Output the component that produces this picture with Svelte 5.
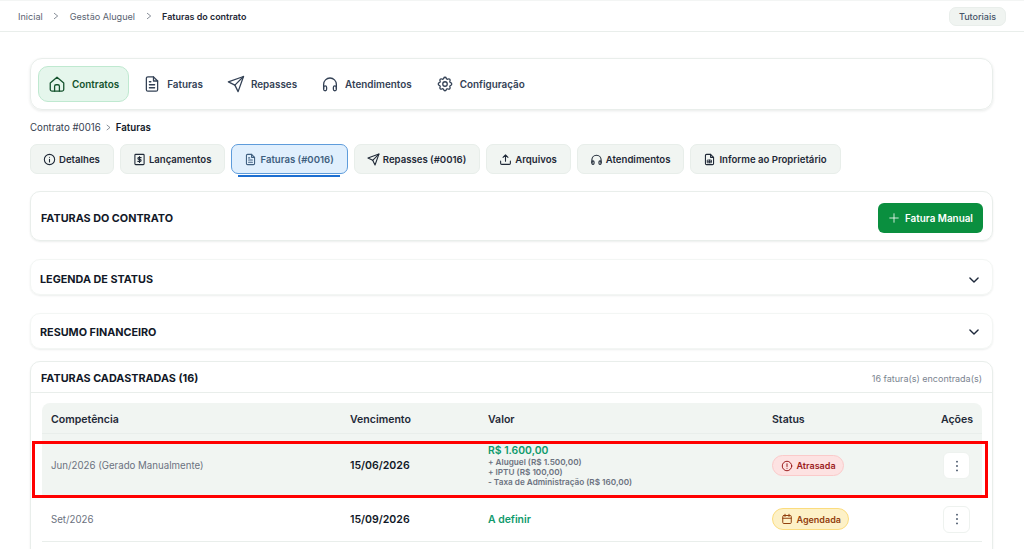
<script>
  const navItems = [
    { label: "Contratos", icon: "home", active: true },
    { label: "Faturas", icon: "file" },
    { label: "Repasses", icon: "send" },
    { label: "Atendimentos", icon: "headphones" },
    { label: "Configuração", icon: "gear" }
  ];

  const tabs = [
    { label: "Detalhes", icon: "info" },
    { label: "Lançamentos", icon: "dollar" },
    { label: "Faturas (#0016)", icon: "file", active: true },
    { label: "Repasses (#0016)", icon: "send" },
    { label: "Arquivos", icon: "upload" },
    { label: "Atendimentos", icon: "headphones" },
    { label: "Informe ao Proprietário", icon: "report" }
  ];

  const rows = [
    {
      competencia: "Jun/2026 (Gerado Manualmente)",
      vencimento: "15/06/2026",
      valor: "R$ 1.600,00",
      detalhes: ["+ Aluguel (R$ 1.500,00)", "+ IPTU (R$ 100,00)", "- Taxa de Administração (R$ 160,00)"],
      status: "Atrasada",
      highlight: true
    },
    {
      competencia: "Set/2026",
      vencimento: "15/09/2026",
      valor: "A definir",
      detalhes: [],
      status: "Agendada"
    }
  ];
</script>

{#snippet icon(name)}
  <svg class="icon" viewBox="0 0 24 24" fill="none" stroke="currentColor" stroke-width="2" stroke-linecap="round" stroke-linejoin="round">
    {#if name === "home"}
      <path d="M3 10.800 12 3l9 7.800V19a2.500 2.500 0 0 1-2.500 2.500h-13A2.500 2.500 0 0 1 3 19z" />
      <path d="M8.800 21.500V15a2 2 0 0 1 2-2h2.400a2 2 0 0 1 2 2v6.500" />
    {:else if name === "file"}
      <path d="M14 2.500H6.500a2 2 0 0 0-2 2v15a2 2 0 0 0 2 2h11a2 2 0 0 0 2-2V8z" />
      <path d="M14 2.500V8h5.500" />
      <path d="M8.500 13h7M8.500 17h7M8.500 9h2" />
    {:else if name === "send"}
      <path d="M22 2 1.800 9.200l8.700 4.300L14.800 22.200z" />
      <path d="M22 2 10.500 13.500" />
    {:else if name === "headphones"}
      <path d="M3.500 18v-5.500a8.500 8.500 0 0 1 17 0V18" />
      <rect x="3.500" y="14.500" width="4" height="6.500" rx="2" />
      <rect x="16.500" y="14.500" width="4" height="6.500" rx="2" />
    {:else if name === "gear"}
      <path d="M10.325 4.317c.426 -1.756 2.924 -1.756 3.35 0a1.724 1.724 0 0 0 2.573 1.066c1.543 -.94 3.31 .826 2.37 2.37a1.724 1.724 0 0 0 1.065 2.572c1.756 .426 1.756 2.924 0 3.35a1.724 1.724 0 0 0 -1.066 2.573c.94 1.543 -.826 3.31 -2.37 2.37a1.724 1.724 0 0 0 -2.572 1.065c-.426 1.756 -2.924 1.756 -3.35 0a1.724 1.724 0 0 0 -2.573 -1.066c-1.543 .94 -3.31 -.826 -2.37 -2.37a1.724 1.724 0 0 0 -1.065 -2.572c-1.756 -.426 -1.756 -2.924 0 -3.35a1.724 1.724 0 0 0 1.066 -2.573c-.94 -1.543 .826 -3.31 2.37 -2.37c1 .608 2.296 .07 2.572 -1.065z" />
      <circle cx="12" cy="12" r="3" />
    {:else if name === "info"}
      <circle cx="12" cy="12" r="9.500" />
      <path d="M12 11.500v5M12 7.800v.1" />
    {:else if name === "dollar"}
      <rect x="3.500" y="2.500" width="17" height="19" rx="1.500" />
      <path d="M15 8.500h-4.200a1.700 1.700 0 0 0 0 3.500h2.400a1.700 1.700 0 0 1 0 3.500H9M12 6.500v11" />
    {:else if name === "upload"}
      <path d="M12 15V3.500M7.500 8 12 3.500 16.500 8" />
      <path d="M3 15v4a2 2 0 0 0 2 2h14a2 2 0 0 0 2-2v-4" />
    {:else if name === "report"}
      <path d="M14 2.500H6.500a2 2 0 0 0-2 2v15a2 2 0 0 0 2 2h11a2 2 0 0 0 2-2V8z" />
      <path d="M14 2.500V8h5.500" />
      <path d="M8.500 13h7v5h-7zM12 13v5M8.500 15.500h7" stroke-width="1.500" />
    {:else if name === "alert"}
      <circle cx="12" cy="12" r="9.500" />
      <path d="M12 7.500v5.500M12 16.500v.1" />
    {:else if name === "calendar"}
      <rect x="3.500" y="5" width="17" height="16" rx="2" />
      <path d="M3.500 10.500h17M8 2.500V7M16 2.500V7" />
    {:else if name === "plus"}
      <path d="M12 3.500v17M3.500 12h17" />
    {:else if name === "chevron"}
      <path d="m5 8.500 7 7 7-7" />
    {:else if name === "right"}
      <path d="m7 4 10 8-10 8" />
    {:else if name === "dots"}
      <path d="M12 4.500v.1M12 12v.1M12 19.500v.1" stroke-width="3.200" />
    {/if}
  </svg>
{/snippet}

<div class="page">
  <header class="topbar">
    <nav class="crumbs">
      <span>Inicial</span>
      {@render icon("right")}
      <span>Gestão Aluguel</span>
      {@render icon("right")}
      <strong>Faturas do contrato</strong>
    </nav>
    <button class="tutorials">Tutoriais</button>
  </header>

  <main>
    <section class="mainnav">
      {#each navItems as item}
        <div class="navitem" class:active={item.active}>
          {@render icon(item.icon)}
          <span>{item.label}</span>
        </div>
      {/each}
    </section>

    <div class="subcrumb">
      <span>Contrato #0016</span>
      {@render icon("right")}
      <strong>Faturas</strong>
    </div>

    <div class="tabs">
      {#each tabs as tab}
        <div class="tab" class:active={tab.active}>
          {@render icon(tab.icon)}
          <span>{tab.label}</span>
        </div>
      {/each}
    </div>

    <section class="card title-card">
      <h2>FATURAS DO CONTRATO</h2>
      <button class="primary">
        {@render icon("plus")}
        Fatura Manual
      </button>
    </section>

    <section class="card accordion legend">
      <h2>LEGENDA DE STATUS</h2>
      {@render icon("chevron")}
    </section>

    <section class="card accordion">
      <h2>RESUMO FINANCEIRO</h2>
      {@render icon("chevron")}
    </section>

    <section class="card list">
      <div class="list-head">
        <h2>FATURAS CADASTRADAS (16)</h2>
        <span class="count">16 fatura(s) encontrada(s)</span>
      </div>
      <div class="table">
        <div class="row thead">
          <div>Competência</div>
          <div>Vencimento</div>
          <div>Valor</div>
          <div>Status</div>
          <div class="right">Ações</div>
        </div>
        {#each rows as row}
          <div class="row tbody" class:highlight={row.highlight}>
            <div class="comp">{row.competencia}</div>
            <div class="due">{row.vencimento}</div>
            <div class="amount">
              <div class="value">{row.valor}</div>
              {#each row.detalhes as line}
                <div class="detail">{line}</div>
              {/each}
            </div>
            <div>
              <span class="badge" class:late={row.status === "Atrasada"} class:scheduled={row.status === "Agendada"}>
                {@render icon(row.status === "Atrasada" ? "alert" : "calendar")}
                {row.status}
              </span>
            </div>
            <div class="right">
              <button class="kebab" aria-label="Ações">{@render icon("dots")}</button>
            </div>
          </div>
        {/each}
      </div>
    </section>
  </main>

  <div class="marker"></div>
</div>

<style>
  :global(body) {
    background: #fff;
  }

  .page {
    position: relative;
    height: 549px;
    overflow: hidden;
    font-family: Inter, "Liberation Sans", sans-serif;
    color: #111827;
    background: #fff;
  }

  .topbar {
    height: 32px;
    box-sizing: border-box;
    display: flex;
    align-items: center;
    justify-content: space-between;
    padding: 0 18px;
    border-bottom: 1px solid #e9eeeb;
    border-top: 1px solid #f3f5f4;
  }

  .crumbs {
    display: flex;
    align-items: center;
    gap: 9.500px;
    font-size: 9.100px;
    color: #5b6472;
  }

  .crumbs .icon {
    width: 8px;
    height: 8px;
    color: #4b5563;
  }

  .crumbs strong {
    color: #1f2937;
    font-size: 8.950px;
    font-weight: 600;
  }

  .tutorials {
    width: 57px;
    height: 19px;
    padding: 0;
    font: 500 9px Inter, sans-serif;
    color: #475569;
    background: #f0f4f1;
    border: 1px solid #e9eeeb;
    border-radius: 7px;
  }

  main {
    padding: 26px 31px 0 30px;
  }

  .mainnav {
    display: flex;
    align-items: center;
    gap: 4px;
    height: 52px;
    box-sizing: border-box;
    padding: 0 7px;
    border: 1px solid #e9eeeb;
    border-radius: 12px;
    box-shadow: 0 1px 3px rgba(15, 40, 30, 0.1);
  }

  .navitem {
    display: flex;
    align-items: center;
    gap: 6px;
    height: 36px;
    padding: 0 9px;
    box-sizing: border-box;
    font-size: 9.900px;
    font-weight: 600;
    color: #334155;
    border: 1px solid transparent;
    border-radius: 10px;
  }

  .navitem .icon {
    width: 18px;
    height: 18px;
    stroke-width: 1.700;
  }

  .navitem.active {
    color: #14532d;
    background: #e5f6ec;
    border-color: #bfe9d0;
  }

  .subcrumb {
    display: flex;
    align-items: center;
    gap: 4px;
    height: 14px;
    margin-top: 10px;
    font-size: 9.700px;
    color: #374151;
  }

  .subcrumb .icon {
    width: 7px;
    height: 7px;
  }

  .subcrumb strong {
    color: #111827;
    font-weight: 600;
  }

  .tabs {
    display: flex;
    gap: 6px;
    margin-top: 10px;
  }

  .tab {
    position: relative;
    display: flex;
    align-items: center;
    gap: 3px;
    height: 30px;
    padding: 0 13px 0 12px;
    box-sizing: border-box;
    font-size: 9.600px;
    font-weight: 600;
    color: #1f2937;
    background: #f1f5f2;
    border: 1px solid #e8eeea;
    border-radius: 7px;
  }

  .tab .icon {
    width: 13px;
    height: 13px;
  }

  .tab.active {
    color: #3f5f80;
    background: #e0effd;
    border-color: #5e9cdb;
  }

  .tab.active::after {
    content: "";
    position: absolute;
    left: 6px;
    right: 7px;
    bottom: -4px;
    height: 2px;
    background: #1d6fd1;
  }

  .card {
    border: 1px solid #e9eeeb;
    border-radius: 10px;
    box-shadow: 0 1px 2px rgba(15, 40, 30, 0.08);
  }

  h2 {
    margin: 0;
    font-size: 10.800px;
    font-weight: 700;
    color: #111827;
  }

  .title-card {
    display: flex;
    align-items: center;
    justify-content: space-between;
    height: 50px;
    box-sizing: border-box;
    margin-top: 17px;
    padding: 4px 9px 0 10px;
  }

  .primary {
    display: flex;
    align-items: center;
    gap: 5px;
    width: 105px;
    height: 30px;
    padding: 0 0 0 10px;
    font: 600 9.900px Inter, sans-serif;
    color: #fff;
    background: #0a8f3f;
    border: 0;
    border-radius: 6px;
  }

  .primary .icon {
    width: 12px;
    height: 12px;
    stroke-width: 1.600;
  }

  .accordion {
    display: flex;
    align-items: center;
    justify-content: space-between;
    height: 36px;
    box-sizing: border-box;
    margin-top: 18px;
    padding: 2px 11px 0 9px;
    border-color: #f3f6f4;
  }

  .accordion.legend {
    padding-top: 5px;
  }

  .accordion .icon {
    width: 14px;
    height: 14px;
    stroke-width: 2.400;
    color: #1e293b;
  }

  .list {
    margin-top: 12px;
    padding-bottom: 20px;
  }

  .list-head {
    display: flex;
    align-items: center;
    justify-content: space-between;
    height: 31px;
    box-sizing: border-box;
    padding: 2px 10px 0;
    border-bottom: 1px solid #e9eeeb;
  }

  .count {
    font-size: 9px;
    color: #7b8490;
  }

  .table {
    margin: 10px 10px 0 11px;
  }

  .row {
    display: grid;
    grid-template-columns: 299px 138px 284px 1fr 70px;
    align-items: center;
  }

  .row > div {
    padding: 0 9px;
  }

  .thead {
    height: 31px;
    box-sizing: border-box;
    padding-top: 2px;
    font-size: 10.550px;
    font-weight: 600;
    color: #1f2937;
    background: #f1f5f2;
    border-bottom: 1px solid #e9eeeb;
    border-radius: 8px 8px 0 0;
  }

  .tbody {
    height: 44px;
    border-bottom: 1px solid #e9eeeb;
  }

  .tbody.highlight {
    height: 63px;
    background: #f1f5f2;
    border-bottom: 0;
  }

  .right {
    text-align: right;
  }

  .comp {
    font-size: 9.700px;
    color: #6b7280;
  }

  .due {
    font-size: 10.550px;
    font-weight: 600;
    color: #111827;
  }

  .row > .amount {
    padding-top: 1px;
  }

  .value {
    font-size: 10.400px;
    font-weight: 600;
    line-height: 11.500px;
    color: #0f9a6c;
  }

  .detail {
    font-size: 8.200px;
    font-weight: 600;
    line-height: 10px;
    color: #6b7280;
  }

  .badge {
    display: inline-flex;
    align-items: center;
    gap: 4px;
    height: 21.500px;
    padding: 0 7px 0 7.500px;
    box-sizing: border-box;
    font-size: 9px;
    font-weight: 600;
    border: 1px solid;
    border-radius: 11px;
  }

  .badge .icon {
    width: 12px;
    height: 12px;
  }

  .late {
    color: #9b1c1c;
    background: #fde2e2;
    border-color: #fbcaca;
  }

  .scheduled {
    color: #92400e;
    background: #fdf1c7;
    border-color: #fbdc7e;
  }

  .kebab {
    display: inline-flex;
    align-items: center;
    justify-content: center;
    width: 27px;
    height: 27px;
    margin-right: 3px;
    padding: 0;
    color: #475569;
    background: #fff;
    border: 1px solid #eef2ef;
    border-radius: 6px;
    vertical-align: middle;
  }

  .kebab .icon {
    width: 14px;
    height: 14px;
  }

  /* annotation drawn over the first row */
  .marker {
    position: absolute;
    left: 32px;
    top: 441px;
    width: 956px;
    height: 57px;
    box-sizing: border-box;
    border: 3px solid #f00;
    pointer-events: none;
  }
</style>
